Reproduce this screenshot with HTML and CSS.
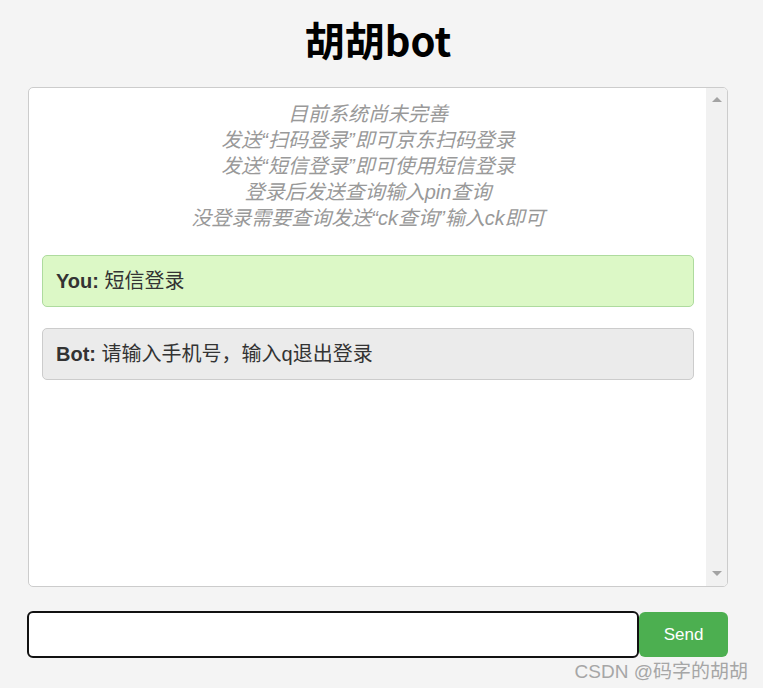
FILE: index.html
```html
<!DOCTYPE html>
<html lang="zh">
<head>
<meta charset="utf-8">
<title>胡胡bot</title>
<link rel="stylesheet" href="styles.css">
</head>
<body>
<div class="page">
  <h1 class="title">胡胡bot</h1>
  <div class="chat">
    <div class="messages">
      <div class="intro">
        <div>目前系统尚未完善</div>
        <div>发送“扫码登录”即可京东扫码登录</div>
        <div>发送“短信登录”即可使用短信登录</div>
        <div>登录后发送查询输入pin查询</div>
        <div>没登录需要查询发送“ck查询”输入ck即可</div>
      </div>
      <div class="msg msg-user"><b>You:</b> 短信登录</div>
      <div class="msg msg-bot"><b>Bot:</b> 请输入手机号，输入q退出登录</div>
    </div>
    <div class="scrollbar">
      <span class="arrow arrow-up"></span>
      <span class="arrow arrow-down"></span>
    </div>
  </div>
  <form class="composer">
    <input class="composer-input" type="text">
    <button class="composer-send" type="button">Send</button>
  </form>
</div>
<div class="watermark">CSDN @码字的胡胡</div>
</body>
</html>
```

FILE: styles.css
```css
html, body {
  margin: 0;
  padding: 0;
}
body {
  background: #f4f4f4;
  font-family: "Liberation Sans", "Noto Sans CJK SC", sans-serif;
  color: #333;
  width: 763px;
  height: 688px;
  overflow: hidden;
  position: relative;
}
.page {
  width: 700px;
  margin-left: 28px;
  padding-top: 9px;
}
.title {
  margin: 0 0 18px 0;
  text-align: center;
  font-size: 40px;
  line-height: 60px;
  font-weight: bold;
  color: #000;
  font-family: "Noto Sans CJK SC", "Open Sans", sans-serif;
}
.chat {
  height: 498px;
  background: #fff;
  border: 1px solid #ccc;
  border-radius: 5px;
  display: flex;
  overflow: hidden;
}
.messages {
  flex: 1;
  padding: 14px 12px 14px 13px;
}
.intro {
  text-align: center;
  font-style: italic;
  color: #999;
  font-size: 20px;
  line-height: 26px;
  margin-bottom: 24px;
  margin-top: -1px;
}
.msg {
  font-size: 20px;
  line-height: 26px;
  padding: 12px 13px;
  border-radius: 5px;
  margin-bottom: 21px;
}
.msg b {
  font-weight: bold;
}
.msg-user {
  background: #dcf8c6;
  border: 1px solid #aedb9e;
}
.msg-bot {
  background: #ebebeb;
  border: 1px solid #cccccc;
}
.scrollbar {
  width: 21px;
  background: #f1f1f1;
  display: flex;
  flex-direction: column;
  justify-content: space-between;
  align-items: center;
  padding: 9px 0 10px 0;
}
.arrow {
  width: 0;
  height: 0;
  border-left: 5px solid transparent;
  border-right: 5px solid transparent;
}
.arrow-up {
  border-bottom: 5px solid #a3a3a3;
}
.arrow-down {
  border-top: 5px solid #a3a3a3;
}
.composer {
  display: flex;
  align-items: center;
  margin-top: 24px;
  margin-left: -1px;
}
.composer-input {
  flex: 1;
  height: 47px;
  box-sizing: border-box;
  border: 2px solid #111;
  border-radius: 6px;
  background: #fff;
  margin: 0;
  padding: 0 10px;
  font-size: 18px;
}
.composer-send {
  width: 89px;
  height: 45px;
  border: none;
  border-radius: 6px;
  background: #4caf50;
  color: #fff;
  font-family: "Liberation Sans", sans-serif;
  font-size: 17px;
  margin: 0;
  padding: 0;
}
.watermark {
  position: absolute;
  right: 15px;
  bottom: 5px;
  font-size: 19px;
  color: #a6a6a6;
  font-family: "Liberation Sans", "Noto Sans CJK SC", sans-serif;
}
```
